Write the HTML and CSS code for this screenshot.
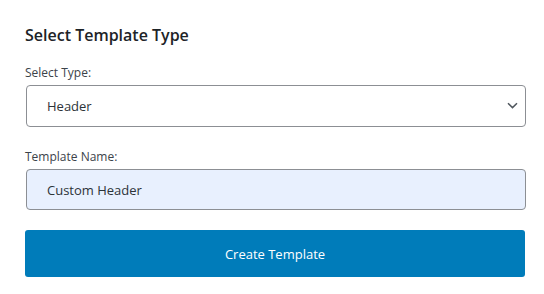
FILE: index.html
```html
<!DOCTYPE html>
<html lang="en">
<head>
<meta charset="UTF-8" />
<title>Select Template Type</title>
<link rel="stylesheet" href="styles.css">
</head>
<body>

<!-- panel -->
<div class="panel">
	<h2 class="panel-title">Select Template Type</h2>

	<div class="field">
		<label class="field-label" for="tpl-type">Select Type:</label>
		<div class="select-wrap">
			<select id="tpl-type" class="select">
				<option>Header</option>
				<option>Footer</option>
				<option>Single</option>
				<option>Archive</option>
			</select>
			<svg class="chevron" width="11" height="7" viewBox="0 0 11 7"><path d="M1 1.2 L5.5 5.6 L10 1.2" fill="none" stroke="#50575e" stroke-width="1.5" /></svg>
		</div>
	</div>

	<div class="field">
		<label class="field-label" for="tpl-name">Template Name:</label>
		<input id="tpl-name" class="text-input" type="text" value="Custom Header" />
	</div>

	<button class="btn-primary" type="button">Create Template</button>
</div>
<!-- /panel -->

</body>
</html>
```

FILE: styles.css
```css
/* -------------------------------------
		GLOBAL
------------------------------------- */
* {
	margin: 0;
	padding: 0;
	box-sizing: border-box;
	font-family: "Open Sans", "Noto Sans", Arial, sans-serif;
}

body {
	background: #fff;
	color: #1e1e1e;
}

/* -------------------------------------
		PANEL
------------------------------------- */
.panel {
	width: 501px;
	padding: 24px 0 0 25px;
	box-sizing: content-box;
}

.panel-title {
	font-size: 16px;
	font-weight: 600;
	line-height: 22px;
	color: #1d2327;
	margin-bottom: 19px;
}

/* -------------------------------------
		FIELDS
------------------------------------- */
.field {
	margin-bottom: 22px;
}

.field:last-of-type {
	margin-bottom: 20px;
}

.field-label {
	display: block;
	font-size: 12px;
	line-height: 16px;
	color: #3c434a;
	margin-bottom: 4px;
}

.select-wrap {
	position: relative;
	margin-left: 1px;
}

.select, .text-input {
	display: block;
	width: 500px;
	height: 42px;
	padding: 0 20px;
	border: 1px solid #8c8f94;
	border-radius: 4px;
	font-size: 13px;
	color: #2c3338;
	outline: none;
}

.select {
	-webkit-appearance: none;
	appearance: none;
	background: #fff;
}

.chevron {
	position: absolute;
	right: 8px;
	top: 17px;
	pointer-events: none;
}

.text-input {
	margin-left: 1px;
	height: 41px;
	background: #e8f0fe;
}

/* -------------------------------------
		BUTTON
------------------------------------- */
.btn-primary {
	display: block;
	width: 500px;
	height: 47px;
	border: none;
	border-radius: 3px;
	background: #007cba;
	color: #fff;
	font-size: 13px;
	font-weight: 500;
	cursor: pointer;
}
```
